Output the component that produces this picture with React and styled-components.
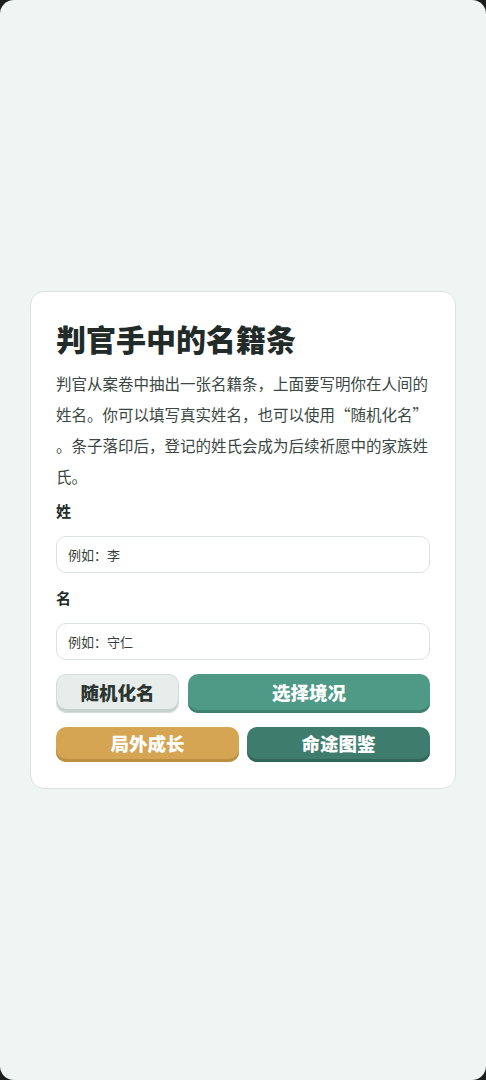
import React from "react";
import styled, { createGlobalStyle } from "styled-components";

const Global = createGlobalStyle`
  html, body { margin: 0; padding: 0; background: #1c1f1e; }
  * { box-sizing: border-box; }
  body { font-family: "Noto Sans CJK SC", "Noto Sans", sans-serif; }
`;

const Screen = styled.div`
  min-height: 100vh;
  background: #eff5f3;
  border-radius: 14px;
  display: flex;
  align-items: center;
  justify-content: center;
  padding: 0 30px;
`;

const Card = styled.div`
  width: 426px;
  background: #ffffff;
  border: 1px solid #d9e3e0;
  border-radius: 14px;
  padding: 24px 25px 26px;
  display: flex;
  flex-direction: column;
`;

const Title = styled.h1`
  margin: 0;
  font-size: 30px;
  line-height: 44px;
  font-weight: 900;
  color: #222b28;
`;

const Intro = styled.p`
  margin: 8px 0 0;
  font-size: 15.5px;
  line-height: 31px;
  color: #3a4743;
  line-break: anywhere;
`;

const Label = styled.div`
  margin-top: ${(p) => p.$mt}px;
  font-size: 15px;
  line-height: 22px;
  font-weight: 700;
  color: #222b28;
`;

const Input = styled.input`
  margin-top: 14px;
  width: 100%;
  height: 37px;
  border: 1px solid #dbe2e0;
  border-radius: 10px;
  padding: 0 11px;
  font-family: "Noto Sans CJK SC", sans-serif;
  font-size: 13px;
  background: #fff;
  outline: none;
  &::placeholder { color: #3a3f3d; }
`;

const Row = styled.div`
  display: grid;
  grid-template-columns: ${(p) => p.$cols};
  gap: ${(p) => p.$gap}px;
  margin-top: ${(p) => p.$mt}px;
`;

const Btn = styled.button`
  height: ${(p) => p.$h}px;
  border-radius: 10px;
  border: ${(p) => (p.$border ? `1px solid ${p.$border}` : "none")};
  background: ${(p) => p.$bg};
  color: ${(p) => p.$fg};
  box-shadow: inset 0 -3px 0 ${(p) => p.$shade};
  font-family: "Noto Sans CJK SC", sans-serif;
  font-size: 18.5px;
  font-weight: 900;
  padding: 0 0 3px;
  cursor: pointer;
`;

export default function App() {
  return (
    <>
      <Global />
      <Screen lang="zh-CN">
        <Card>
          <Title>判官手中的名籍条</Title>
          <Intro>
            判官从案卷中抽出一张名籍条，上面要写明你在人间的姓名。你可以填写真实姓名，也可以使用“随机化名”。条子落印后，登记的姓氏会成为后续祈愿中的家族姓氏。
          </Intro>
          <Label $mt={8}>姓</Label>
          <Input placeholder="例如：李" />
          <Label $mt={14}>名</Label>
          <Input placeholder="例如：守仁" />
          <Row $cols="123px 1fr" $gap={9} $mt={14}>
            <Btn $h={39} $bg="#e7edeb" $fg="#2c3532" $shade="#c6d0cd" $border="#d3dcd9">
              随机化名
            </Btn>
            <Btn $h={39} $bg="#4f9a86" $fg="#ffffff" $shade="#3f8170">
              选择境况
            </Btn>
          </Row>
          <Row $cols="1fr 1fr" $gap={8} $mt={14}>
            <Btn $h={35} $bg="#d5a553" $fg="#ffffff" $shade="#bb8e42">
              局外成长
            </Btn>
            <Btn $h={35} $bg="#3e7c6d" $fg="#ffffff" $shade="#31665a">
              命途图鉴
            </Btn>
          </Row>
        </Card>
      </Screen>
    </>
  );
}
